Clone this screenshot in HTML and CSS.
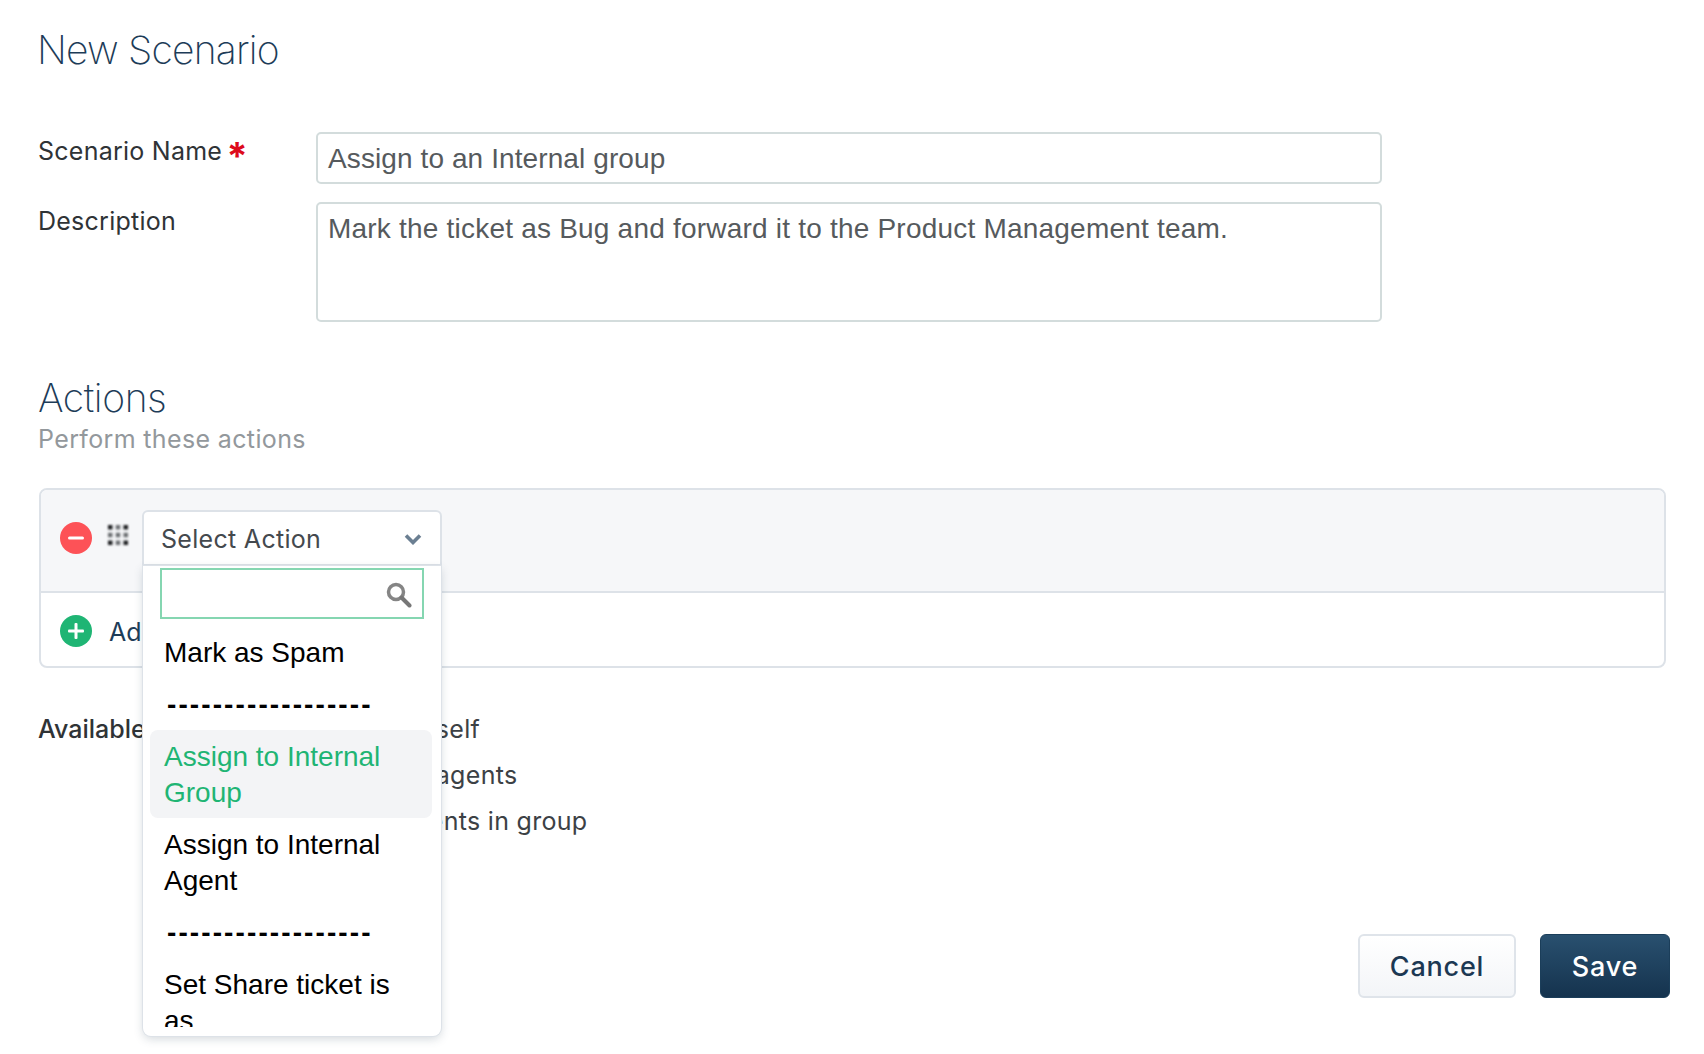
FILE: index.html
```html
<!DOCTYPE html>
<html lang="en">
<head>
<meta charset="utf-8">
<title>New Scenario</title>
<link rel="stylesheet" href="styles.css">
</head>
<body>
<main class="page">
  <h1 class="title">New Scenario</h1>
  <div class="form-row name-row">
    <label class="label">Scenario Name <span class="req">*</span></label>
    <div class="field input">Assign to an Internal group</div>
  </div>
  <div class="form-row">
    <label class="label">Description</label>
    <div class="field textarea">Mark the ticket as Bug and forward it to the Product Management team.</div>
  </div>
  <h2 class="section">Actions</h2>
  <p class="sub">Perform these actions</p>
  <section class="box">
    <div class="box-top">
      <svg class="circle" viewBox="0 0 32 32"><circle cx="16" cy="16" r="16" fill="#fd5257"/><rect x="8" y="14.5" width="16" height="3" rx="1.5" fill="#fff"/></svg>
      <svg class="grip" viewBox="0 0 20 20"><g fill="#1c1e20"><rect x="0" y="0" width="4.5" height="4.5"/><rect x="15.5" y="0" width="4.5" height="4.5"/><rect x="0" y="15.5" width="4.5" height="4.5"/><rect x="15.5" y="15.5" width="4.5" height="4.5"/></g><g fill="#6a6d70"><rect x="7.75" y="0" width="4.5" height="4.5"/><rect x="0" y="7.75" width="4.5" height="4.5"/><rect x="7.75" y="7.75" width="4.5" height="4.5"/><rect x="15.5" y="7.75" width="4.5" height="4.5"/><rect x="7.75" y="15.5" width="4.5" height="4.5"/></g></svg>
      <div class="select-wrap">
        <div class="select">
          <span>Select Action</span>
          <svg class="chev" viewBox="0 0 18 12"><path d="M2 2.5l7 7 7-7" fill="none" stroke="#6b7f92" stroke-width="3.6"/></svg>
        </div>
        <div class="menu">
          <div class="menu-clip">
            <div class="search">
              <svg class="mag" viewBox="0 0 26 26"><circle cx="10" cy="10" r="7.5" fill="none" stroke="#858585" stroke-width="3.5"/><path d="M15.5 15.5l8 8" stroke="#777" stroke-width="4" stroke-linecap="round"/></svg>
            </div>
            <div class="opt">Mark as Spam</div>
            <div class="opt dash">------------------</div>
            <div class="opt active">Assign to Internal Group</div>
            <div class="opt">Assign to Internal Agent</div>
            <div class="opt dash">------------------</div>
            <div class="opt">Set Share ticket is as</div>
          </div>
        </div>
      </div>
    </div>
    <div class="box-bottom">
      <svg class="circle" viewBox="0 0 32 32"><circle cx="16" cy="16" r="16" fill="#1fb574"/><rect x="8" y="14.5" width="16" height="3" rx="1" fill="#fff"/><rect x="14.5" y="8" width="3" height="16" rx="1" fill="#fff"/></svg>
      <span class="add">Add new action</span>
    </div>
  </section>
  <div class="avail">
    <div class="avail-label">Available actions</div>
    <ul class="avail-list">
      <li>Assign to self</li>
      <li>Assign to agents</li>
      <li>Select agents in group</li>
    </ul>
  </div>
  <div class="buttons">
    <button class="btn cancel">Cancel</button>
    <button class="btn save">Save</button>
  </div>
</main>
</body>
</html>
```
FILE: styles.css
```css
* { box-sizing: border-box; }
html, body { margin: 0; background: #fff; }
body { font-family: "Liberation Sans", Arial, sans-serif; height: 1054px; overflow: hidden; }
.page { padding: 0 34px 0 38px; }
.title {
  margin: 0 0 0 -1px; padding-top: 26px; height: 132px;
  font-family: Inter, sans-serif; font-weight: 200; font-size: 39px; line-height: 48px;
  color: #1d3c58; letter-spacing: -0.8px;
}
.form-row { display: flex; margin-bottom: 18px; }
.label {
  width: 278px; padding-top: 3px; font-family: Inter, sans-serif; font-size: 25px; letter-spacing: .25px; line-height: 32px; color: #2f3336;
}
.req { margin-left: -3px; color: #dd0a1b; font-weight: 700; font-size: 38px; letter-spacing: 0; line-height: 0; vertical-align: -10px; }
.field {
  width: 1066px; border: 2px solid #d3dcdc; border-radius: 5px; background: #fff;
  padding: 9px 10px; font-size: 28px; line-height: 32px; color: #565a5d;
}
.input { height: 52px; letter-spacing: .1px; }
.textarea { height: 120px; letter-spacing: .21px; }
.section {
  margin: 0; padding-top: 34px;
  font-family: Inter, sans-serif; font-weight: 200; font-size: 39px; line-height: 48px;
  color: #1d3c58; letter-spacing: -0.4px;
}
.sub {
  margin: 0; font-family: Inter, sans-serif; font-size: 25px; letter-spacing: .36px; line-height: 34px; color: #93989c; height: 66px;
}
.box { width: 1627px; height: 180px; margin-left: 1px; border: 2px solid #dde2e8; border-radius: 8px; }
.box-top {
  display: flex; height: 103px; padding: 20px 0 0 19px;
  background: #f6f7f9; border-bottom: 2px solid #dde2e8; border-radius: 6px 6px 0 0;
}
.circle { width: 32px; height: 32px; flex: none; }
.box-top .circle { margin-top: 12px; }
.grip { width: 20px; height: 20px; margin: 15px 14px 0 16px; flex: none; filter: blur(.9px); }
.select-wrap { position: relative; width: 300px; }
.select {
  display: flex; justify-content: space-between; align-items: center;
  height: 56px; padding: 2px 18px 0 17px;
  background: #fff; border: 2px solid #dde2e8; border-radius: 6px 6px 0 0;
  font-family: Inter, sans-serif; font-size: 25px; color: #44494e; letter-spacing: .3px;
}
.chev { width: 18px; height: 12px; }
.menu {
  position: absolute; left: 1px; top: 56px; width: 298px; height: 470px; z-index: 2;
  background: #fff; border-radius: 0 0 8px 8px;
  box-shadow: 0 0 0 1px #dde2e8, 0 3px 10px rgba(60,80,100,.22);
  padding: 2px 7px 9px;
}
.menu-clip { height: 459px; overflow: hidden; }
.search {
  position: relative; width: 264px; height: 51px; margin: 0 0 7px 10px;
  border: 2px solid #85d6b1; background: #fff;
}
.mag { position: absolute; right: 10px; top: 12px; width: 26px; height: 26px; filter: blur(.4px); }
.opt {
  width: 282px; padding: 9px 15px 7px 14px; border-radius: 8px;
  font-size: 28px; line-height: 36px; color: #000;
}
.dash { font-weight: 700; letter-spacing: 2.1px; padding-left: 17px; }
.active { background: #f3f4f6; color: #1fb574; }
.box-bottom { display: flex; align-items: center; height: 75px; padding-left: 19px; }
.add { margin-left: 17px; padding-top: 2px; font-family: Inter, sans-serif; font-size: 25px; color: #1d3c58; }
.avail { display: flex; margin-top: 44px; }
.avail-label {
  width: 278px; font-family: Inter, sans-serif; font-weight: 500; font-size: 25px; line-height: 34px; color: #2f3336;
}
.avail-list {
  margin: -6px 0 0; padding: 0; list-style: none;
  font-family: Inter, sans-serif; font-size: 25px; letter-spacing: .3px; line-height: 46px; color: #3c4145;
}
.buttons { display: flex; justify-content: flex-end; gap: 24px; margin-top: 90px; }
.btn {
  height: 64px; border-radius: 6px; font-family: Inter, sans-serif; font-weight: 500; font-size: 27px; letter-spacing: .8px;
}
.cancel { width: 158px; border: 2px solid #dfe4ea; background: linear-gradient(#fff, #f3f5f8); color: #1c3853; }
.save { width: 130px; border: 1px solid #1b3e5a; background: linear-gradient(#29506f, #15334e); color: #fff; }
```
